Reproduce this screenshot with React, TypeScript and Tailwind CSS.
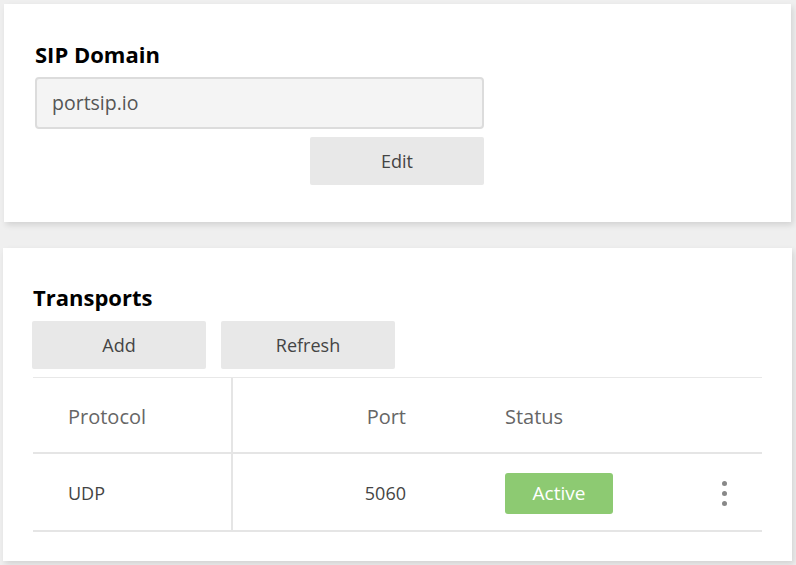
const font = { fontFamily: '"Open Sans", "Noto Sans", sans-serif' };

const TRANSPORTS = [{ protocol: 'UDP', port: 5060, status: 'Active' }];

const App = () => {
  return (
    <div className="min-h-[565px] w-[796px] bg-[#efefef] pt-[4px]" style={font}>
      {/* SIP domain card */}
      <div className="ml-[4px] h-[218px] w-[787px] bg-white pl-[31px] pt-[35px] shadow-[2px_3px_6px_rgba(0,0,0,0.12)]">
        <h2 className="text-[22px] font-bold leading-[30px] text-black">SIP Domain</h2>
        <div className="mt-[8px] flex h-[52px] w-[449px] items-center rounded-[4px] border-2 border-[#dcdcdc] bg-[#f4f4f4] pl-[15px] text-[19.5px] text-[#555]">
          portsip.io
        </div>
        <div className="mt-[8px] flex w-[449px] justify-end">
          <button className="h-[48px] w-[174px] rounded-[2px] bg-[#e8e8e8] text-[18px] text-[#444]">Edit</button>
        </div>
      </div>

      {/* Transports card */}
      <div className="ml-[3px] mt-[26px] h-[313px] w-[789px] bg-white pl-[29px] pt-[34px] shadow-[2px_3px_6px_rgba(0,0,0,0.12)]">
        <h2 className="pl-[1px] text-[22px] font-bold leading-[30px] text-black">Transports</h2>
        <div className="mt-[9px] flex gap-[15px]">
          <button className="h-[48px] w-[174px] rounded-[2px] bg-[#e8e8e8] text-[18px] text-[#444]">Add</button>
          <button className="h-[48px] w-[174px] rounded-[2px] bg-[#e8e8e8] text-[18px] text-[#444]">Refresh</button>
        </div>

        <div className="ml-[1px] mt-[8px] w-[729px] border-t border-[#e8e8e8]">
          <div className="grid h-[76px] grid-cols-[200px_204px_325px] text-[20px] text-[#666] [&>div]:border-b-2 [&>div]:border-[#e5e5e5] [&>div]:pt-[3px]">
            <div className="flex items-center border-r-2 pl-[35px]">Protocol</div>
            <div className="flex items-center justify-end pr-[31px]">Port</div>
            <div className="flex items-center pl-[68px]">Status</div>
          </div>
          {TRANSPORTS.map((t, idx) => (
            <div
              key={idx}
              className="grid h-[78px] grid-cols-[200px_204px_325px] text-[18px] text-[#444] [&>div]:border-b-2 [&>div]:border-[#e5e5e5] [&>div]:pt-[2px]"
            >
              <div className="flex items-center border-r-2 pl-[35px]">{t.protocol}</div>
              <div className="flex items-center justify-end pr-[31px]">{t.port}</div>
              <div className="flex items-center justify-between pl-[68px] pr-[35px]">
                <span className="flex h-[41px] w-[108px] items-center justify-center rounded-[3px] bg-[#8dca72] text-[19px] text-white">
                  {t.status}
                </span>
                <span className="flex flex-col gap-[5px]">
                  <span className="h-[5px] w-[5px] rounded-full bg-[#888]" />
                  <span className="h-[5px] w-[5px] rounded-full bg-[#888]" />
                  <span className="h-[5px] w-[5px] rounded-full bg-[#888]" />
                </span>
              </div>
            </div>
          ))}
        </div>
      </div>
    </div>
  );
};

export default App;
